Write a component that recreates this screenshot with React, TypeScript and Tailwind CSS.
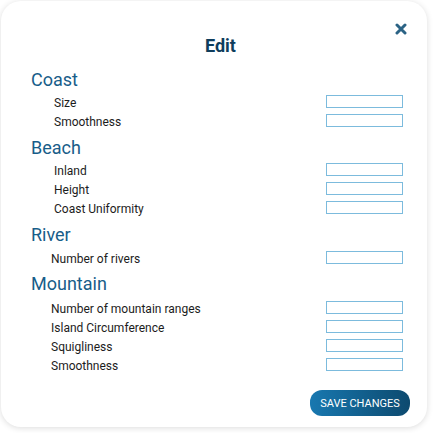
import React from "react";

type Section = {
  title: string;
  indent: string;
  top: string;
  gap: string;
  fields: string[];
};

const sections: Section[] = [
  { title: "Coast", indent: "pl-[23px]", top: "mt-[11px]", gap: "mb-[2px]", fields: ["Size", "Smoothness"] },
  { title: "Beach", indent: "pl-[23px]", top: "mt-[6px]", gap: "mb-[2px]", fields: ["Inland", "Height", "Coast Uniformity"] },
  { title: "River", indent: "pl-[20px]", top: "mt-[6px]", gap: "mb-[3px]", fields: ["Number of rivers"] },
  {
    title: "Mountain",
    indent: "pl-[20px]",
    top: "mt-[5px]",
    gap: "mb-[4px]",
    fields: ["Number of mountain ranges", "Island Circumference", "Squigliness", "Smoothness"],
  },
];

function CloseIcon() {
  return (
    <svg width="12" height="12" viewBox="0 0 12 12" fill="none">
      <path d="M2 2L10 10M10 2L2 10" stroke="#2b6385" strokeWidth="3" strokeLinecap="round" />
    </svg>
  );
}

export default function App() {
  return (
    <div
      className="h-[433px] w-[433px] bg-white p-[1px]"
      style={{ fontFamily: "Roboto, 'Noto Sans', sans-serif" }}
    >
      <div className="relative flex h-[426px] w-[426px] flex-col rounded-[20px] bg-white pl-[30px] pr-[17px] pt-[33px] shadow-[0_1px_6px_rgba(0,0,0,0.14)]">
        <button type="button" className="absolute right-[19px] top-[21px] grid h-[14px] w-[14px] place-items-center">
          <CloseIcon />
        </button>

        <h2 className="text-center text-[18px] font-bold leading-[24px] text-[#0f3d5c]">Edit</h2>

        {sections.map((s) => (
          <div key={s.title} className={s.top}>
            <h3 className={`text-[18px] leading-[22px] text-[#185d89] ${s.gap}`}>{s.title}</h3>
            {s.fields.map((f) => (
              <div key={f} className={`flex h-[19px] items-center justify-between pr-[7px] ${s.indent}`}>
                <span className="text-[12px] text-[#1c1c1c]">{f}</span>
                <input
                  type="text"
                  className="mb-[2px] h-[13px] w-[77px] border border-[#7cbbdd] bg-white outline-none"
                />
              </div>
            ))}
          </div>
        ))}

        <div className="mt-[15px] flex justify-end">
          <button
            type="button"
            className="h-[26px] w-[100px] rounded-[12px] bg-gradient-to-r from-[#1878b0] to-[#0d4a6f] text-[11px] uppercase leading-none text-white"
          >
            Save changes
          </button>
        </div>
      </div>
    </div>
  );
}
